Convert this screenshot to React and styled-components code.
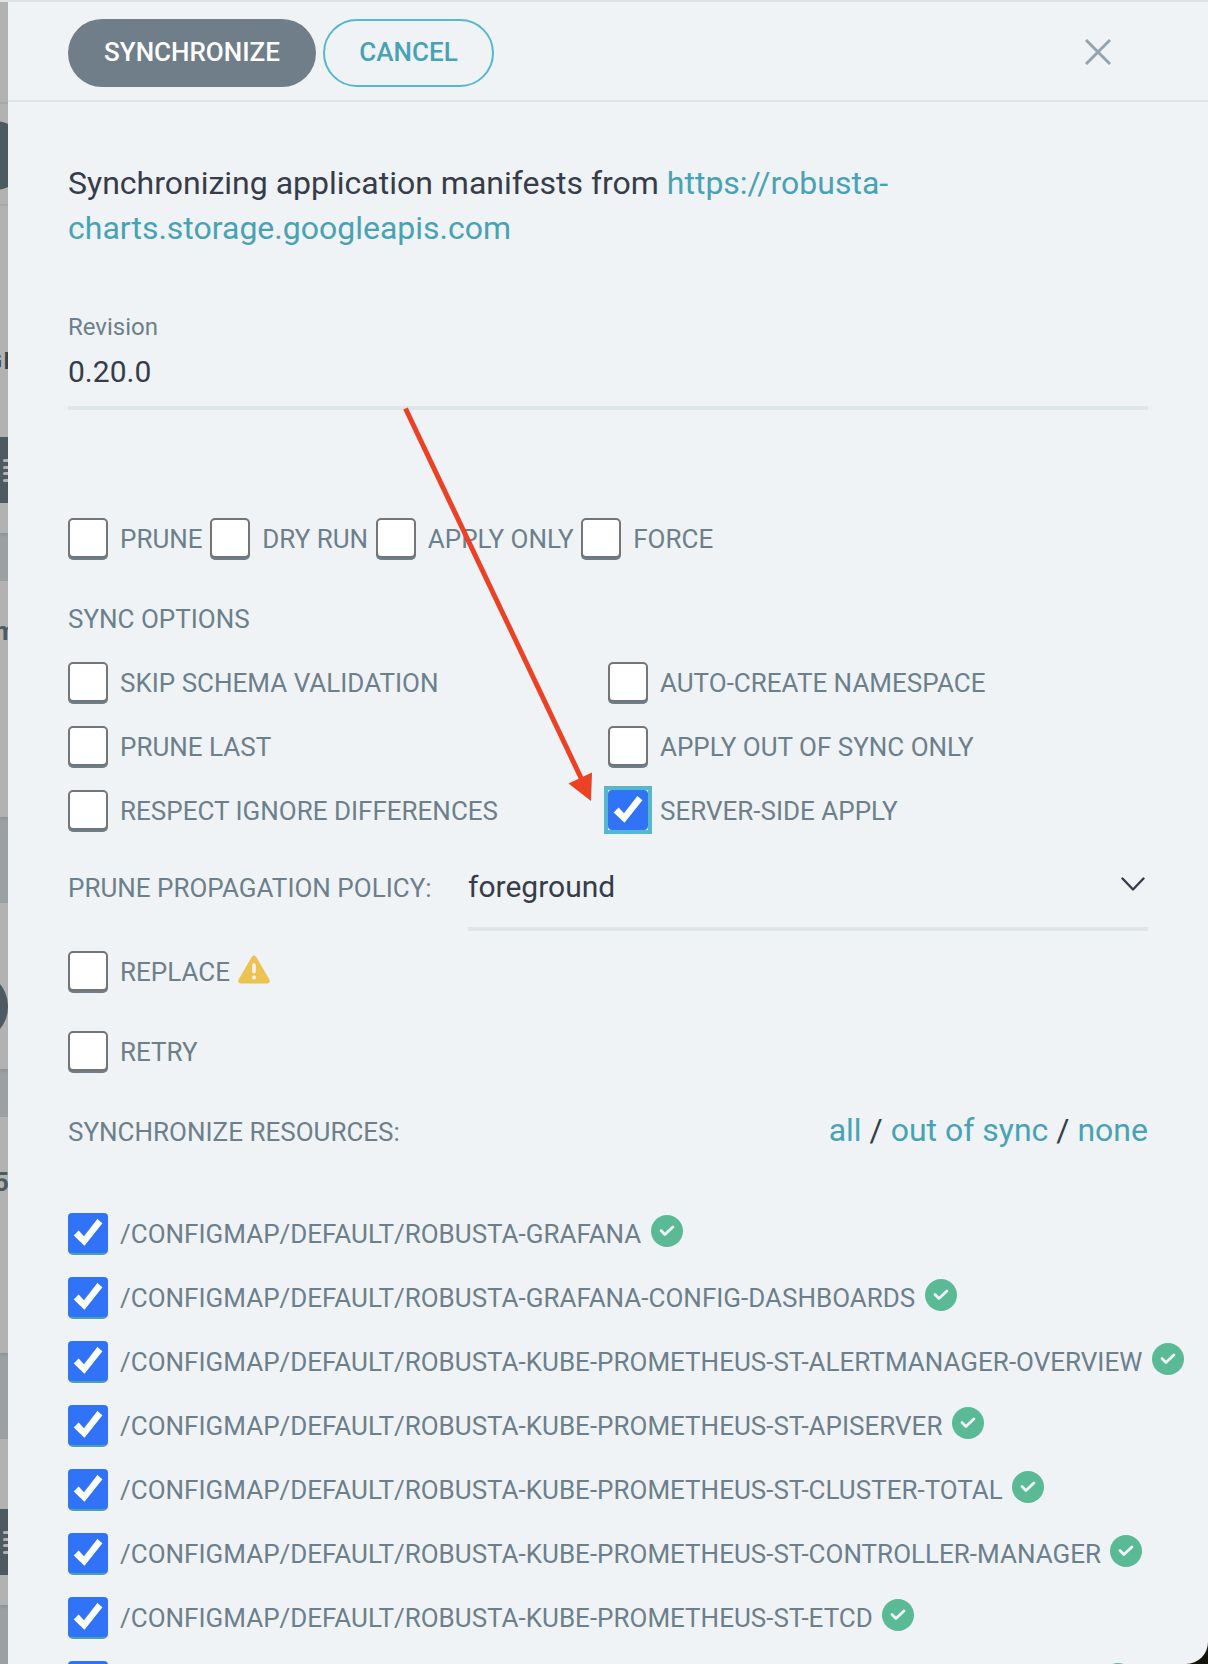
import React from 'react';
import styled, { createGlobalStyle, css } from 'styled-components';

const Global = createGlobalStyle`
  *, *::before, *::after { box-sizing: border-box; }
  body { margin: 0; background: #14120b; font-family: Roboto, "Liberation Sans", sans-serif; color: #363c4a; }
  button { font-family: inherit; margin: 0; }
`;

const Window = styled.div`
  display: flex;
  position: relative;
  width: 1208px;
  height: 1664px;
  overflow: hidden;
  background: #eff3f6;
  border-top: 2px solid #dfe3e1;
  border-bottom-right-radius: 22px;
`;

/* Dimmed application list behind the panel */
const Backdrop = styled.div`
  flex: none;
  width: 8px;
  height: 1662px;
  overflow: hidden;
  display: flex;
  flex-direction: column;
  background: #9ba1a3;
`;
const Tile = styled.div`
  flex: none;
  height: ${p => p.$h}px;
  margin-bottom: ${p => p.$gap}px;
  padding-top: ${p => p.$pad || 0}px;
  background: #b2b2b2;
  overflow: hidden;
  box-shadow: 0 2px 3px #8d9295;
`;
const Divider = styled.div`
  height: 2px;
  background: #a8a8a8;
`;
const Pill = styled.div`
  width: ${p => p.$w || 100}px;
  height: 69px;
  margin: ${p => p.$m};
  border-radius: 34px;
  background: #4e5a62;
`;
const Clipped = styled.div`
  height: 24px;
  margin: ${p => p.$m};
  width: 60px;
  line-height: 24px;
  font-size: ${p => p.$size || 24}px;
  font-weight: 700;
  text-align: ${p => p.$align || 'right'};
  letter-spacing: ${p => p.$spacing || 0}px;
  color: ${p => p.$color || '#4e5a62'};
`;
const MenuBlock = styled.div`
  height: 66px;
  margin-top: ${p => p.$top}px;
  padding: 22px 0 0 3px;
  display: flex;
  flex-direction: column;
  gap: 3.5px;
  background: #4e5a62;
`;
const MenuLine = styled.i`
  flex: none;
  width: 12px;
  height: 3px;
  border-radius: 2px;
  background: #b2b2b2;
`;

const Panel = styled.main`
  flex: 1;
  min-width: 0;
  overflow: hidden;
`;
const Header = styled.header`
  height: 100px;
  padding: 0 97px 0 60px;
  display: flex;
  align-items: center;
  gap: 7px;
  border-bottom: 2px solid #dee5e8;
`;
const Button = styled.button`
  width: ${p => p.$w}px;
  height: 68px;
  margin-top: 4px;
  padding: 0 0 2px;
  border-radius: 34px;
  font-size: 26px;
  font-weight: 500;
  ${p => p.$primary
    ? css`border: 0; background: #707e89; color: #fff;`
    : css`border: 2px solid #57b8cd; background: transparent; color: #49a2b3;`}
`;
const Close = styled.svg`
  margin: 2px 0 0 auto;
  width: 26px;
  height: 26px;
  stroke: #94a4b1;
  stroke-width: 3;
`;

const Content = styled.div`
  padding: 59px 60px 0;
`;
const Intro = styled.p`
  margin: 0;
  width: 900px;
  font-size: 32px;
  line-height: 45px;
`;
const Link = styled.a`color: #49a2b3;`;
const Field = styled.div`
  margin-top: 62px;
  height: 97px;
  border-bottom: 4px solid #dee6e9;
`;
const FieldLabel = styled.div`
  font-size: 24px;
  line-height: 28px;
  color: #6d7f8b;
`;
const FieldValue = styled.div`
  margin-top: 13px;
  font-size: 30px;
  line-height: 36px;
`;

const CheckRow = styled.div`
  display: flex;
  margin-top: ${p => p.$top || 0}px;
  gap: 7.6px;
`;
const OptionGrid = styled.div`
  display: grid;
  grid-template-columns: 540px 540px;
  row-gap: 24px;
  margin-top: 23px;
`;
const CheckItem = styled.label`
  display: flex;
  height: 40px;
  align-items: flex-start;
  flex: none;
  white-space: nowrap;
`;
const Box = styled.span`
  flex: none;
  width: 40px;
  height: 40px;
  border-radius: 5px;
  border: 2px solid #757575;
  background: #fff;
  box-shadow: 0 2px 0 #6d7f8b;
  ${p => p.$checked && css`
    border: 0;
    background: transparent;
    box-shadow: 0 2px 0 #49a2b3;
  `}
  ${p => p.$focused && css`
    background: #fff;
    box-shadow: none;
    outline: 4px solid #57b8cd;
    outline-offset: 0;
    border-radius: 0;
  `}
`;
const TickMark = styled.svg`
  display: block;
  width: 40px;
  height: 40px;
`;
const Caption = styled.span`
  padding-top: 1px;
  font-size: 26px;
  line-height: 40px;
  color: #6d7f8b;
  ${p => p.$indent && css`margin-left: 12px;`}
`;
const SectionLabel = styled.div`
  margin-top: 41px;
  font-size: 26px;
  line-height: 40px;
  color: #6d7f8b;
`;
const PolicyRow = styled.div`
  display: flex;
  margin-top: 29px;
  height: 72px;
`;
const PolicyLabel = styled(Caption)`
  width: 400px;
  padding-top: 9px;
`;
const Select = styled.div`
  flex: 1;
  display: flex;
  justify-content: space-between;
  border-bottom: 4px solid #dee6e9;
  font-size: 30px;
  line-height: 55px;
`;
const Chevron = styled.svg`
  width: 24px;
  height: 15px;
  margin: 18px 3px 0 0;
  fill: none;
  stroke: #363c4a;
  stroke-width: 2.4;
  stroke-linecap: round;
  stroke-linejoin: round;
`;
const WarningIcon = styled.svg`
  width: 32px;
  height: 29px;
  margin: 3.5px 0 0 8px;
`;
const ResourcesHead = styled.div`
  display: flex;
  justify-content: space-between;
  margin-top: 40px;
  height: 40px;
`;
const Filters = styled.div`
  font-size: 32px;
  line-height: 38px;
`;
const ResourceList = styled.div`
  display: flex;
  flex-direction: column;
  gap: 24px;
  margin-top: 62px;
`;
const SyncedIcon = styled.svg`
  flex: none;
  width: 32px;
  height: 32px;
  margin: 2px 0 0 9.3px;
`;

const Arrow = styled.svg`
  position: absolute;
  left: 400px;
  top: 398px;
  width: 200px;
  height: 410px;
  pointer-events: none;
`;

function Tick() {
  return (
    <TickMark viewBox="0 0 40 40">
      <rect width="40" height="40" rx="4" fill="#3073f6" />
      <path d="M5.7 22.6 10.6 17.6 16 23.3 29.4 6 34.4 10.3 16.5 32.8Z" fill="#fff" />
    </TickMark>
  );
}

function Check({ label, checked, focused, children }) {
  return (
    <CheckItem>
      <Box $checked={checked} $focused={focused}>{checked && <Tick />}</Box>
      <Caption $indent>{label}</Caption>
      {children}
    </CheckItem>
  );
}

function Synced() {
  return (
    <SyncedIcon viewBox="0 0 32 32">
      <circle cx="16" cy="16" r="16" fill="#59ba95" />
      <path d="M10 15.6 13.9 19.5 21.9 11.9" fill="none" stroke="#eff3f6" strokeWidth="2.8" strokeLinecap="round" strokeLinejoin="round" />
    </SyncedIcon>
  );
}

function Menu({ top }) {
  return (
    <MenuBlock $top={top}>
      <MenuLine /><MenuLine /><MenuLine /><MenuLine />
    </MenuBlock>
  );
}

const RESOURCES = [
  'ROBUSTA-GRAFANA',
  'ROBUSTA-GRAFANA-CONFIG-DASHBOARDS',
  'ROBUSTA-KUBE-PROMETHEUS-ST-ALERTMANAGER-OVERVIEW',
  'ROBUSTA-KUBE-PROMETHEUS-ST-APISERVER',
  'ROBUSTA-KUBE-PROMETHEUS-ST-CLUSTER-TOTAL',
  'ROBUSTA-KUBE-PROMETHEUS-ST-CONTROLLER-MANAGER',
  'ROBUSTA-KUBE-PROMETHEUS-ST-ETCD',
  'ROBUSTA-KUBE-PROMETHEUS-ST-GRAFANA-DATASOURCE',
];

export default function App() {
  return (
    <>
      <Global />
      <Window>
        <Backdrop>
          <Tile $h={531} $gap={48} $pad={100}>
            <Divider />
            <Pill $m="17px 0 14px -72px" />
            <Divider />
            <Clipped $m="143px 0 0 -38px" $spacing={1.5} $color="#3a444d">GN</Clipped>
            <Menu top={64} />
          </Tile>
          <Tile $h={236} $gap={86} $pad={38}>
            <Clipped $m="0 0 0 -6px" $size={26} $align="left">m</Clipped>
          </Tile>
          <Tile $h={166} $gap={48} $pad={69}>
            <Pill $m="0 0 0 -60px" $w={68} />
          </Tile>
          <Tile $h={236} $gap={86} $pad={53}>
            <Clipped $m="0 0 0 -6px" $size={26} $align="left">5</Clipped>
          </Tile>
          <Tile $h={166} $gap={60}>
            <Menu top={70} />
          </Tile>
        </Backdrop>
        <Panel>
          <Header>
            <Button $primary $w={248}>SYNCHRONIZE</Button>
            <Button $w={171}>CANCEL</Button>
            <Close viewBox="0 0 26 26"><path d="M1 1 25 25M25 1 1 25" /></Close>
          </Header>
          <Content>
            <Intro>
              Synchronizing application manifests from <Link>https://robusta-charts.storage.googleapis.com</Link>
            </Intro>
            <Field>
              <FieldLabel>Revision</FieldLabel>
              <FieldValue>0.20.0</FieldValue>
            </Field>
            <CheckRow $top={108}>
              <Check label="PRUNE" />
              <Check label="DRY RUN" />
              <Check label="APPLY ONLY" />
              <Check label="FORCE" />
            </CheckRow>
            <SectionLabel>SYNC OPTIONS</SectionLabel>
            <OptionGrid>
              <Check label="SKIP SCHEMA VALIDATION" />
              <Check label="AUTO-CREATE NAMESPACE" />
              <Check label="PRUNE LAST" />
              <Check label="APPLY OUT OF SYNC ONLY" />
              <Check label="RESPECT IGNORE DIFFERENCES" />
              <Check label="SERVER-SIDE APPLY" checked focused />
            </OptionGrid>
            <PolicyRow>
              <PolicyLabel>PRUNE PROPAGATION POLICY:</PolicyLabel>
              <Select>
                foreground
                <Chevron viewBox="0 0 24 15"><path d="M1.5 1.5 12 12.5 22.5 1.5" /></Chevron>
              </Select>
            </PolicyRow>
            <CheckRow $top={20}>
              <Check label="REPLACE">
                <WarningIcon viewBox="0 0 32 29">
                  <path d="M13.7 1.9Q16-1 18.3 1.9L31.5 24.7Q32.5 28 29.5 28.5H2.5Q-.5 28 .5 24.7Z" fill="#ecc251" />
                  <path d="M16 10V16.7" stroke="#eff3f6" strokeWidth="3.6" strokeLinecap="round" />
                  <circle cx="16" cy="22.4" r="2" fill="#eff3f6" />
                </WarningIcon>
              </Check>
            </CheckRow>
            <CheckRow $top={40}><Check label="RETRY" /></CheckRow>
            <ResourcesHead>
              <Caption>SYNCHRONIZE RESOURCES:</Caption>
              <Filters><Link>all</Link> / <Link>out of sync</Link> / <Link>none</Link></Filters>
            </ResourcesHead>
            <ResourceList>
              {RESOURCES.map(name => (
                <Check key={name} label={`/CONFIGMAP/DEFAULT/${name}`} checked><Synced /></Check>
              ))}
            </ResourceList>
          </Content>
        </Panel>
        <Arrow viewBox="400 400 200 410">
          <path d="M405.5 408.5 582 780" stroke="#eb4226" strokeWidth="5" />
          <path d="M568.5 783.5 592 772.5 591 801Z" fill="#eb4226" />
        </Arrow>
      </Window>
    </>
  );
}
